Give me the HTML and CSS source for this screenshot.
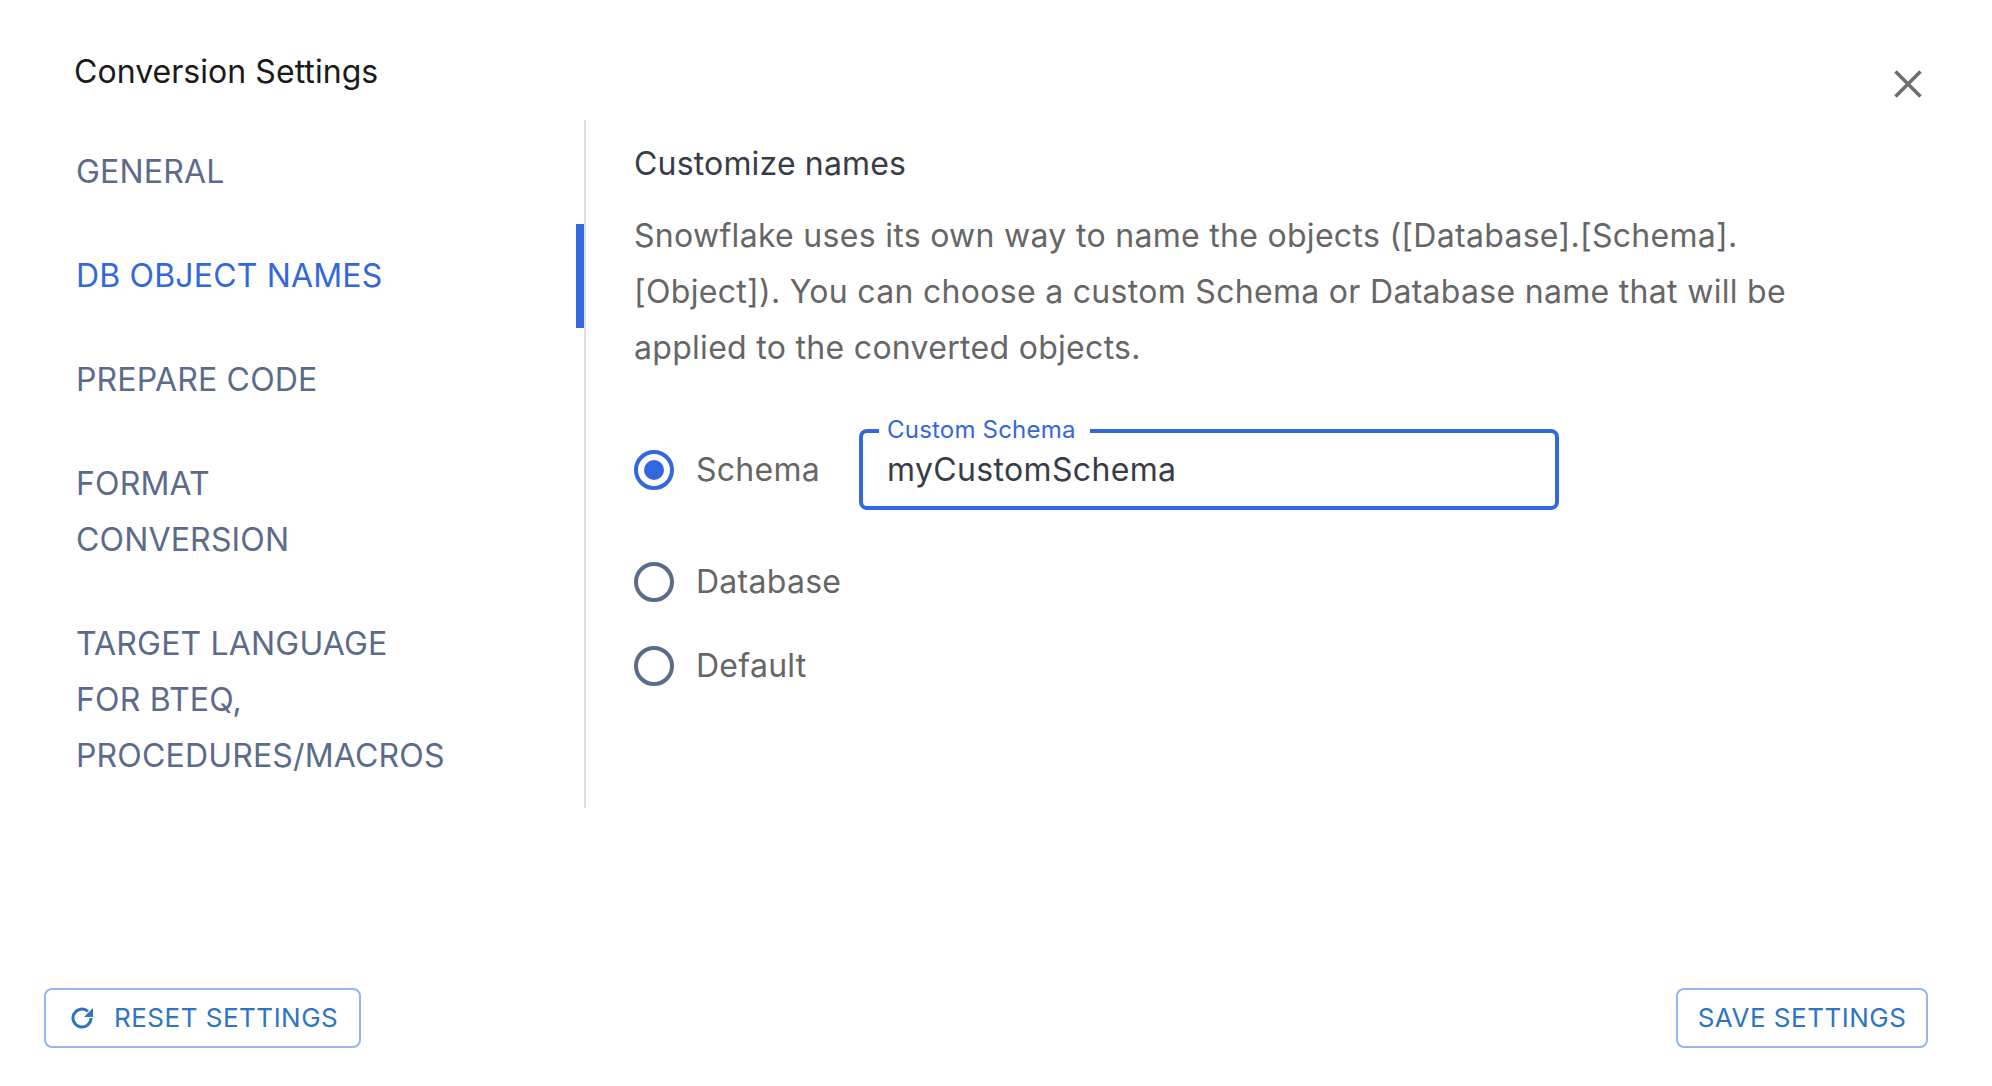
FILE: index.html
```html
<!DOCTYPE html>
<html lang="en">
<head>
<meta charset="utf-8">
<title>Conversion Settings</title>
<link rel="stylesheet" href="styles.css">
</head>
<body>
<div class="dialog">
  <header class="dialog-head">
    <h1 class="dialog-title">Conversion Settings</h1>
    <button class="close" aria-label="Close">
      <svg class="close-icon" viewBox="0 0 28 28"><path d="M1.5 1.5 26.5 26.5M26.5 1.5 1.5 26.5"/></svg>
    </button>
  </header>
  <div class="dialog-body">
    <nav class="side">
      <a class="side-item">GENERAL</a>
      <a class="side-item active">DB OBJECT NAMES</a>
      <a class="side-item">PREPARE CODE</a>
      <a class="side-item">FORMAT<br>CONVERSION</a>
      <a class="side-item">TARGET LANGUAGE<br>FOR BTEQ,<br>PROCEDURES/MACROS</a>
    </nav>
    <main class="panel">
      <h2 class="panel-title">Customize names</h2>
      <p class="panel-text">Snowflake uses its own way to name the objects ([Database].[Schema].[Object]). You can choose a custom Schema or Database name that will be applied to the converted objects.</p>
      <div class="options">
        <div class="option option-first">
          <span class="radio checked"></span>
          <span class="option-label">Schema</span>
          <div class="field">
            <span class="field-label">Custom Schema</span>
            <span class="field-value">myCustomSchema</span>
          </div>
        </div>
        <div class="option">
          <span class="radio"></span>
          <span class="option-label">Database</span>
        </div>
        <div class="option">
          <span class="radio"></span>
          <span class="option-label">Default</span>
        </div>
      </div>
    </main>
  </div>
  <footer class="dialog-foot">
    <button class="btn btn-reset">
      <svg class="btn-icon" viewBox="0 0 24 24"><path d="M21 12A9 9 0 1 1 18 5.3"/><path class="fill" d="M23 2V11H14Z"/></svg>
      RESET SETTINGS
    </button>
    <button class="btn btn-save">SAVE SETTINGS</button>
  </footer>
</div>
</body>
</html>
```
FILE: styles.css
```css
* { box-sizing: border-box; }
html, body { margin: 0; height: 100%; background: #fff; }
body { font-family: Inter, "Liberation Sans", sans-serif; }

.dialog {
  height: 1086px;
  display: flex;
  flex-direction: column;
  overflow: hidden;
}

.dialog-head {
  height: 120px;
  display: flex;
  justify-content: space-between;
  align-items: flex-start;
  padding: 0 70px 0 74px;
}
.dialog-title {
  margin: 0;
  padding-top: 44px;
  font-size: 32px;
  line-height: 56px;
  font-weight: 400;
  letter-spacing: 0.05px;
  color: #1a1a1a;
}
.close {
  margin-top: 70px;
  padding: 0;
  width: 28px;
  height: 28px;
  border: 0;
  background: none;
}
.close-icon { display: block; width: 28px; height: 28px; }
.close-icon path { fill: none; stroke: #6f6f6f; stroke-width: 3.6; }

.dialog-body { display: flex; align-items: flex-start; }

.side {
  width: 586px;
  flex: none;
  border-right: 2px solid #e0e0e0;
  display: flex;
  flex-direction: column;
}
.side-item {
  display: block;
  padding: 24px 0 24px 76px;
  font-size: 32px;
  line-height: 56px;
  letter-spacing: 0.17px;
  color: #5c6b8a;
}
.side-item.active {
  color: #3367dd;
  box-shadow: inset -8px 0 0 #3367dd;
}

.panel { padding: 16px 0 0 48px; width: 1260px; }
.panel-title {
  margin: 0;
  font-size: 32px;
  line-height: 56px;
  font-weight: 400;
  letter-spacing: 0.17px;
  color: #373c47;
}
.panel-text {
  margin: 16px 0 0;
  font-size: 32px;
  line-height: 56px;
  letter-spacing: 0.3px;
  color: #666;
}

.options {
  margin-top: 54px;
  display: flex;
  flex-direction: column;
  gap: 28px;
}
.option { display: flex; align-items: center; }
.option-first { height: 80px; margin-bottom: 16px; }
.radio {
  width: 40px;
  height: 40px;
  flex: none;
  border: 4px solid #5c6b8a;
  border-radius: 50%;
  display: flex;
  align-items: center;
  justify-content: center;
}
.radio.checked { border-color: #3367dd; }
.radio.checked::after {
  content: "";
  width: 20px;
  height: 20px;
  border-radius: 50%;
  background: #3367dd;
}
.option-label {
  margin-left: 22px;
  font-size: 32px;
  line-height: 56px;
  letter-spacing: 0.27px;
  color: #666;
}
.field {
  position: relative;
  align-self: flex-start;
  margin: -1px 0 0 39px;
  width: 700px;
  height: 81px;
  border: 4px solid #3367dd;
  border-radius: 8px;
  padding: 1px 0 0 24px;
  display: flex;
  align-items: center;
}
.field-label {
  position: absolute;
  left: 16px;
  top: -19px;
  padding: 0 14px 0 8px;
  background: #fff;
  font-size: 24px;
  line-height: 32px;
  letter-spacing: 0.2px;
  color: #3367dd;
}
.field-value {
  font-size: 32px;
  line-height: 56px;
  letter-spacing: 0.35px;
  color: #373c47;
}

.dialog-foot {
  margin-top: auto;
  padding: 0 64px 38px 44px;
  display: flex;
  justify-content: space-between;
}
.btn {
  height: 60px;
  border: 2px solid #96b4ee;
  border-radius: 8px;
  background: #fff;
  font-family: inherit;
  font-size: 26px;
  letter-spacing: 0.5px;
  color: #2f74c0;
  display: flex;
  align-items: center;
  padding-bottom: 2px;
}
.btn-reset { width: 317px; padding-left: 24px; gap: 20px; }
.btn-save { width: 252px; justify-content: center; }
.btn-icon { width: 24px; height: 24px; flex: none; }
.btn-icon path { fill: none; stroke: #2f74c0; stroke-width: 3; }
.btn-icon path.fill { fill: #2f74c0; stroke: none; }
```
